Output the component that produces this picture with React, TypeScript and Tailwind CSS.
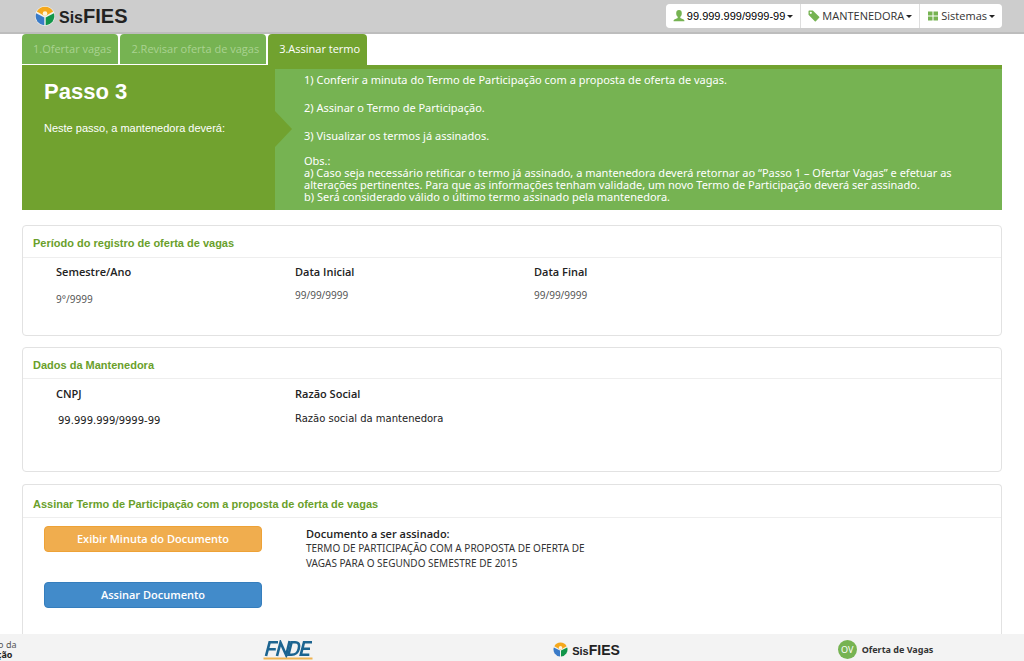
import type { ReactNode } from "react"

const steps = ["1.Ofertar vagas", "2.Revisar oferta de vagas", "3.Assinar termo"]

function Mark({ className }: { className: string }) {
  return (
    <svg viewBox="0 0 20 20" className={className} aria-hidden="true">
      <circle cx="10" cy="10" r="10" fill="#f2f2ee" />
      <path d="M1.8 5.6A9.3 9.3 0 0 1 18.2 5.6L10 10.2Z" fill="#f5a81c" />
      <path d="M1.1 7.2L9.3 11.4V19.2A9.2 9.2 0 0 1 1.1 7.2Z" fill="#3a7bc8" />
      <path d="M18.9 7.2L10.7 11.4V19.2A9.2 9.2 0 0 0 18.9 7.2Z" fill="#12964a" />
      <circle cx="10" cy="7.6" r="2.3" fill="#fff6dd" />
    </svg>
  )
}

function Caret() {
  return <span className="border-x-[3px] border-t-[3px] border-x-transparent border-t-[#222]" />
}

function MenuButton({ icon, children }: { icon: ReactNode; children: ReactNode }) {
  return (
    <button type="button" className="flex items-center gap-0.5 bg-white px-[7px] text-[11px] text-[#333]" style={{ fontFamily: '"Open Sans", "Noto Sans", sans-serif' }}>
      {icon}
      {children}
      <Caret />
    </button>
  )
}

function Header() {
  return (
    <header className="flex h-[34px] items-center justify-between border-b-2 border-[#bdbdbd] bg-[#cdcdcd] pr-[22px] pl-[35px]">
      <a href="#" className="flex items-center gap-1 text-[#222]" style={{ fontFamily: '"Liberation Sans", Arial, sans-serif' }}>
        <Mark className="size-5" />
        <span className="leading-none">
          <span className="text-base font-bold">Sis</span>
          <span className="text-xl font-bold">FIES</span>
        </span>
      </a>
      <nav className="flex h-6 gap-px overflow-hidden rounded-sm bg-[#dedede]">
        <MenuButton
          icon={
            <svg viewBox="0 0 12 12" className="size-3 fill-[#76b352]" aria-hidden="true">
              <path d="M6 0C4.2 0 3.2 1.2 3.2 3.2C3.2 4.9 3.9 6 4.7 6.8V8L1.4 9.6C.8 9.9.6 10.3.6 11.2H11.4C11.4 10.3 11.2 9.9 10.6 9.6L7.3 8V6.8C8.1 6 8.8 4.9 8.8 3.2C8.8 1.2 7.8 0 6 0Z" />
            </svg>
          }
        >
          <span className="text-black" style={{ fontFamily: '"Liberation Sans", Arial, sans-serif' }}>99.999.999/9999-99</span>
        </MenuButton>
        <MenuButton
          icon={
            <svg viewBox="0 0 12 12" className="size-3 fill-[#76b352]" aria-hidden="true">
              <path fillRule="evenodd" d="M.5 1.2V4.8L6.8 11.2Q7.3 11.7 7.8 11.2L11.2 7.8Q11.7 7.3 11.2 6.8L4.8.5H1.2Q.5.5.5 1.2ZM2.8 1.7A1.1 1.1 0 1 1 2.8 3.9A1.1 1.1 0 1 1 2.8 1.7Z" />
            </svg>
          }
        >
          MANTENEDORA
        </MenuButton>
        <MenuButton
          icon={
            <svg viewBox="0 0 12 12" className="size-3 fill-[#76b352]" aria-hidden="true">
              <path d="M1 1.5H5.5V5.5H1ZM6.5 1.5H11V5.5H6.5ZM1 6.5H5.5V10.5H1ZM6.5 6.5H11V10.5H6.5Z" />
            </svg>
          }
        >
          Sistemas
        </MenuButton>
      </nav>
    </header>
  )
}

function StepTabs() {
  return (
    <nav className="flex gap-0.5" style={{ fontFamily: '"Open Sans", "Noto Sans", sans-serif' }}>
      {steps.map((s, i) => (
        <button
          key={s}
          type="button"
          className={
            i === 2
              ? "h-[31px] rounded-t bg-[#71a22f] pr-[7px] pl-[11px] text-[11px] text-white"
              : "mb-px h-[30px] rounded-t bg-[#76b352] pr-[7px] pl-[11px] text-[11px] text-[#a9d291]"
          }
        >
          {s}
        </button>
      ))}
    </nav>
  )
}

function Banner() {
  return (
    <section className="flex border-t-4 border-[#71a22f] bg-[#76b352] text-white">
      <div className="relative w-[253px] shrink-0 bg-[#71a22f] px-[22px] pt-[7px]" style={{ fontFamily: '"Liberation Sans", Arial, sans-serif' }}>
        <h1 className="text-[22px] leading-8 font-bold">Passo 3</h1>
        <p className="mt-3 text-[11px] leading-4">Neste passo, a mantenedora deverá:</p>
        <span className="absolute top-[42px] left-full border-y-[18px] border-l-[17px] border-y-transparent border-l-[#71a22f]" />
      </div>
      <div className="min-w-0 flex-1 pt-[3px] pr-5 pb-[7px] pl-[29px] text-[11px] leading-3">
        <div className="flex flex-col gap-3 leading-4">
          <p>1) Conferir a minuta do Termo de Participação com a proposta de oferta de vagas.</p>
          <p>2) Assinar o Termo de Participação.</p>
          <p>3) Visualizar os termos já assinados.</p>
        </div>
        <p className="mt-[11px]">Obs.:</p>
        <p>
          a) Caso seja necessário retificar o termo já assinado, a mantenedora deverá retornar ao “Passo 1 – Ofertar Vagas” e efetuar as alterações pertinentes. Para que as informações tenham validade, um novo Termo de Participação deverá ser assinado.
        </p>
        <p>b) Será considerado válido o último termo assinado pela mantenedora.</p>
      </div>
    </section>
  )
}

function Panel({ title, className, titleClass, children }: { title: string; className: string; titleClass: string; children: ReactNode }) {
  return (
    <section className={`border border-[#e2e2e2] ${className}`}>
      <h2
        className={`border-b border-[#eee] px-[10px] text-[11px] leading-[14px] font-bold text-[#6a9f2b] ${titleClass}`}
        style={{ fontFamily: '"Liberation Sans", Arial, sans-serif' }}
      >
        {title}
      </h2>
      {children}
    </section>
  )
}

function Field({ label, children }: { label: string; children: ReactNode }) {
  return (
    <div>
      <dt className="text-[11px] leading-4 font-semibold text-[#222]" style={{ fontFamily: '"Open Sans", "Noto Sans", sans-serif' }}>{label}</dt>
      {children}
    </div>
  )
}

function Footer() {
  return (
    <footer className="h-[27px] overflow-hidden bg-[#f3f3f3] text-[#333]">
      <div className="-ml-[161px] grid h-full w-[1196px] grid-cols-4 place-items-center">
        <p className="w-14 pt-1 text-[9px] leading-[10px] whitespace-nowrap text-[#555]">
          <span className="block text-right">Ministério da</span>
          <b className="block pr-1 text-right text-[#222]">Educação</b>
        </p>
        <svg viewBox="0 0 50 20" className="mt-1 h-5 w-[50px]" role="img" aria-label="FNDE">
          <g fill="none" stroke="#1c6490" strokeWidth="2.6">
            <path d="M3 16L6.6 2.3H15M5 9.2H12.8" />
            <path d="M14 16L17.5 2.5L23.2 15.3L26.6 1" />
            <path d="M25.5 14.7L28.6 2.3H32C36.3 2.3 36.7 5.2 35.7 9C34.6 13.4 32.7 14.7 28.5 14.7Z" />
            <path d="M49 2.3H41L37.8 14.7H46.3M39.5 8.7H47" />
          </g>
          <path d="M.5 18.5H49.5" stroke="#f0b452" strokeWidth="2" />
        </svg>
        <div className="flex items-center gap-1 pt-1 text-[#222]" style={{ fontFamily: '"Liberation Sans", Arial, sans-serif' }}>
          <Mark className="size-[15px]" />
          <span className="leading-none">
            <span className="text-[11px] font-bold">Sis</span>
            <span className="text-sm font-bold">FIES</span>
          </span>
        </div>
        <div className="flex items-center gap-[5px] pt-1">
          <span className="flex size-[19px] items-center justify-center rounded-full bg-[#76b352] text-[9px] text-white">OV</span>
          <b className="text-[9px]">Oferta de Vagas</b>
        </div>
      </div>
    </footer>
  )
}

export default function App() {
  return (
    <div className="flex min-h-screen flex-col bg-white" style={{ fontFamily: '"Noto Sans", "Open Sans", sans-serif' }}>
      <Header />
      <main className="flex flex-1 flex-col px-[22px]">
        <StepTabs />
        <Banner />
        <Panel title="Período do registro de oferta de vagas" className="mt-[15px] rounded" titleClass="pt-[10px] pb-[7px]">
          <dl className="grid grid-cols-[239px_239px_1fr] pt-[6px] pb-7 pl-[33px]">
            <Field label="Semestre/Ano">
              <dd className="mt-[11px] text-[10px] leading-4 text-[#555]">9°/9999</dd>
            </Field>
            <Field label="Data Inicial">
              <dd className="mt-[7px] text-[10px] leading-4 text-[#555]">99/99/9999</dd>
            </Field>
            <Field label="Data Final">
              <dd className="mt-[7px] text-[10px] leading-4 text-[#555]">99/99/9999</dd>
            </Field>
          </dl>
        </Panel>
        <Panel title="Dados da Mantenedora" className="mt-[11px] rounded" titleClass="pt-[10px] pb-[6px]">
          <dl className="grid grid-cols-[239px_1fr] pt-[7px] pb-[42px] pl-[33px]">
            <Field label="CNPJ">
              <dd className="mt-[11px] pl-0.5 text-[10px] leading-4 text-[#222]" style={{ fontFamily: '"DejaVu Sans", Verdana, sans-serif' }}>99.999.999/9999-99</dd>
            </Field>
            <Field label="Razão Social">
              <dd className="mt-[9px] text-[10px] leading-4 text-[#222]" style={{ fontFamily: '"DejaVu Sans", Verdana, sans-serif' }}>Razão social da mantenedora</dd>
            </Field>
          </dl>
        </Panel>
        <Panel
          title="Assinar Termo de Participação com a proposta de oferta de vagas"
          className="mt-3 flex-1 rounded-t border-b-0"
          titleClass="pt-3 pb-[6px]"
        >
          <div className="flex gap-11 pt-2 pl-[21px]">
            <div className="flex w-[218px] flex-col gap-[30px] text-[11px] font-semibold text-white" style={{ fontFamily: '"Open Sans", "Noto Sans", sans-serif' }}>
              <button type="button" className="h-[26px] rounded-sm border border-[#eea236] bg-[#f0ad4e]">Exibir Minuta do Documento</button>
              <button type="button" className="h-[26px] rounded-sm border border-[#357ebd] bg-[#428bca]">Assinar Documento</button>
            </div>
            <div className="w-[300px] text-[10px] leading-[15px] text-[#333]">
              <h3 className="text-[11px] font-semibold text-[#222]" style={{ fontFamily: '"Open Sans", "Noto Sans", sans-serif' }}>Documento a ser assinado:</h3>
              <p>TERMO DE PARTICIPAÇÃO COM A PROPOSTA DE OFERTA DE VAGAS PARA O SEGUNDO SEMESTRE DE 2015</p>
            </div>
          </div>
        </Panel>
      </main>
      <Footer />
    </div>
  )
}
